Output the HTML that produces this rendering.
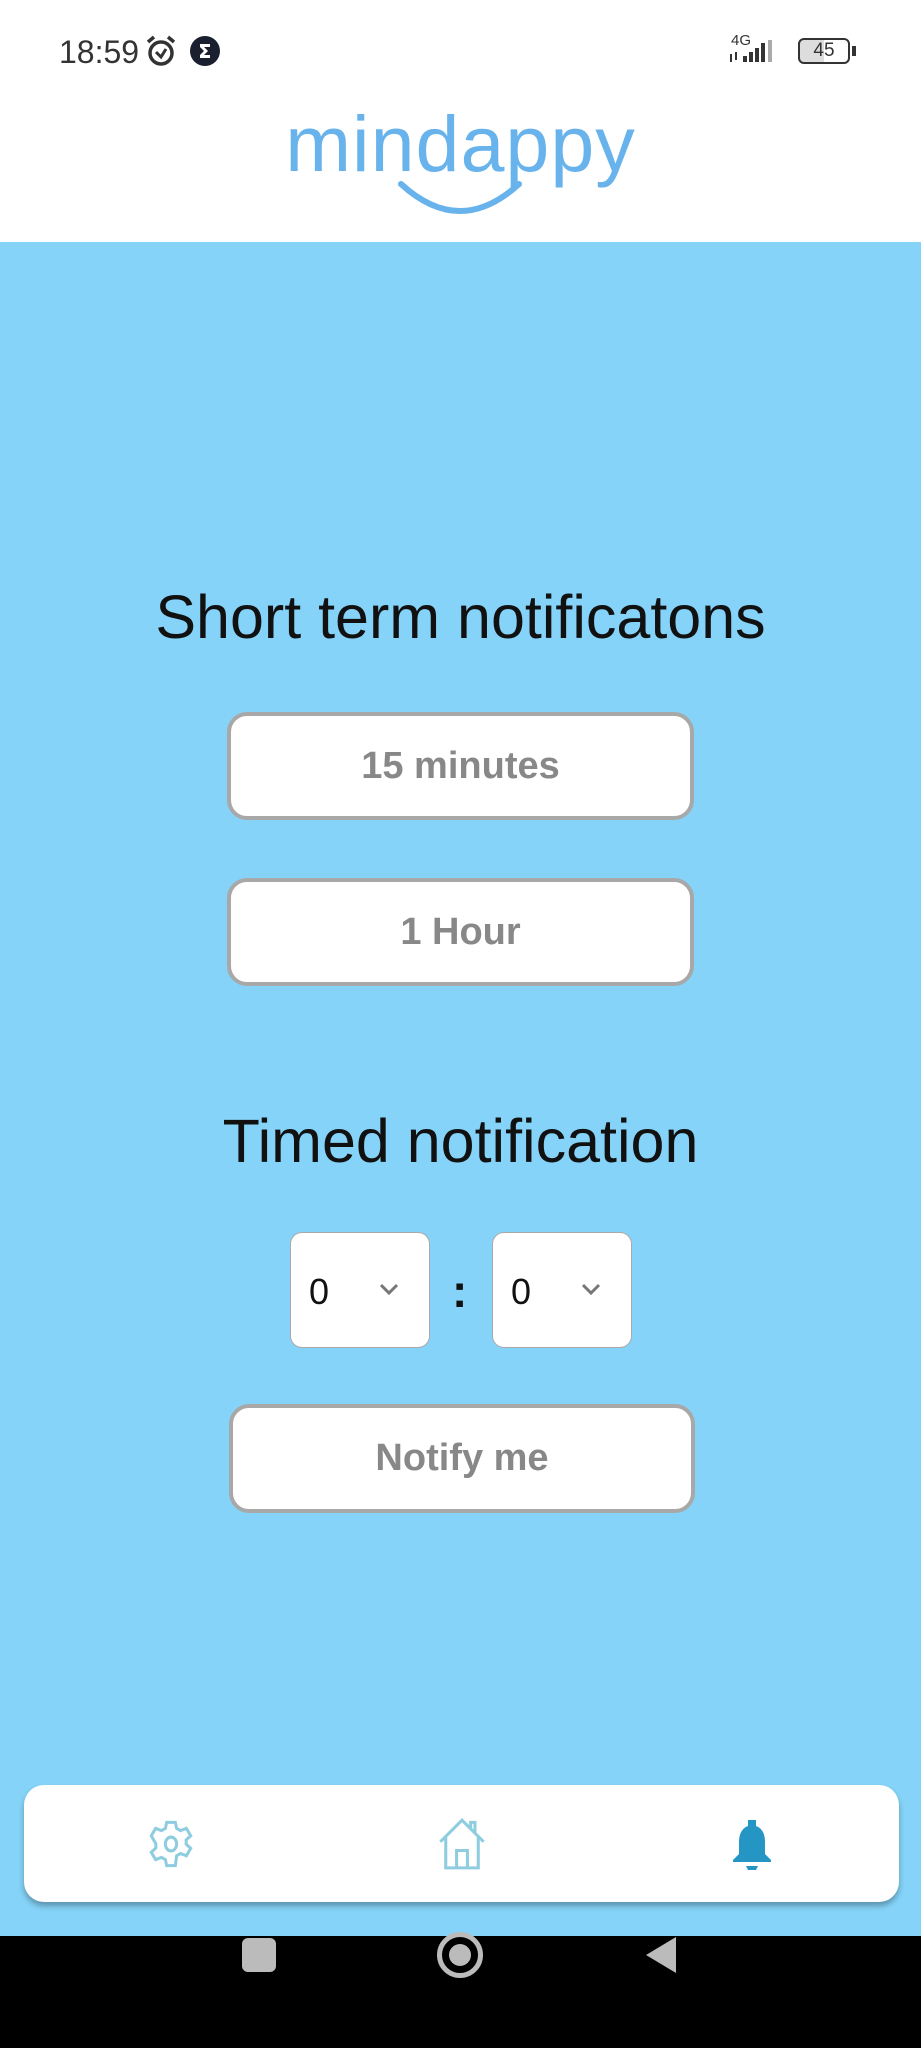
<!DOCTYPE html>
<html><head><meta charset="utf-8">
<style>
*{margin:0;padding:0;box-sizing:border-box}
body{width:921px;height:2048px;position:relative;overflow:hidden;background:#85d3f8;font-family:"Liberation Sans",sans-serif}
.hdr{position:absolute;left:0;top:0;width:921px;height:242px;background:#fff}
.time{position:absolute;left:59px;top:34px;font-size:32px;color:#333}
.logo{position:absolute;left:0;width:921px;top:98px;text-align:center;font-size:79px;color:#68b3ec;letter-spacing:1px;font-weight:300}
h2{position:absolute;left:0;width:921px;text-align:center;font-weight:normal;font-size:61px;color:#111}
.btn{position:absolute;background:#fff;border:4px solid #a8a8a8;border-radius:20px;text-align:center;font-weight:bold;font-size:38px;color:#888;display:flex;align-items:center;justify-content:center}
.sel{position:absolute;top:1232px;width:140px;height:116px;background:#fff;border:1px solid #aaa;border-radius:12px;font-size:36px;color:#111}
.sel span{position:absolute;left:18px;top:38px}
.sel svg{position:absolute;right:30px;top:50px}
.bar{position:absolute;left:24px;top:1785px;width:875px;height:117px;background:#fff;border-radius:20px;box-shadow:0 4px 6px rgba(0,0,0,.3)}
.nav{position:absolute;left:0;top:1936px;width:921px;height:112px;background:#000}
</style></head><body>
<div class="hdr">
<div class="time">18:59</div>
<svg style="position:absolute;left:145px;top:34px" width="32" height="34" viewBox="0 0 32 34"><circle cx="16" cy="19" r="11" fill="none" stroke="#333" stroke-width="3.5"/><path d="M11 18l5 5 5-8" fill="none" stroke="#333" stroke-width="3"/><path d="M3 8l6-5M29 8l-6-5" stroke="#333" stroke-width="3.5"/></svg>
<svg style="position:absolute;left:190px;top:36px" width="30" height="30"><circle cx="15" cy="15" r="15" fill="#1a2030"/><path d="M10 8h10v3h-6l4 4-4 4h6v3H10v-3l4-4-4-4z" fill="#fff"/></svg>
<div style="position:absolute;left:731px;top:32px;font-size:15px;color:#333">4G</div>
<svg style="position:absolute;left:729px;top:40px" width="58" height="24"><rect x="14" y="16" width="4" height="6" fill="#333"/><rect x="20" y="12" width="4" height="10" fill="#333"/><rect x="26" y="8" width="4" height="14" fill="#333"/><rect x="32" y="3" width="4" height="19" fill="#333"/><rect x="39" y="0" width="4" height="22" fill="#aaa"/><path d="M2 14v8M7 12v8" stroke="#333" stroke-width="2"/></svg>
<div style="position:absolute;left:798px;top:38px;width:52px;height:26px;border:2.5px solid #333;border-radius:6px;font-size:19px;text-align:center;line-height:21px;color:#333;background:linear-gradient(90deg,#ddd 50%,#fff 50%)">45</div>
<div style="position:absolute;left:852px;top:46px;width:4px;height:10px;background:#333"></div>
<div class="logo">mindappy</div>
<svg style="position:absolute;left:395px;top:178px" width="130" height="36"><path d="M6 6 Q65 60 124 6" fill="none" stroke="#68b3ec" stroke-width="6" stroke-linecap="round"/></svg>
</div>

<h2 style="top:582px">Short term notificatons</h2>
<div class="btn" style="left:227px;top:712px;width:467px;height:108px">15 minutes</div>
<div class="btn" style="left:227px;top:878px;width:467px;height:108px">1 Hour</div>
<h2 style="top:1106px">Timed notification</h2>
<div class="sel" style="left:290px"><span>0</span><svg width="20" height="12"><path d="M2 2l8 8 8-8" fill="none" stroke="#777" stroke-width="3"/></svg></div>
<div style="position:absolute;left:452px;top:1264px;font-size:46px;color:#111;font-weight:bold">:</div>
<div class="sel" style="left:492px"><span>0</span><svg width="20" height="12"><path d="M2 2l8 8 8-8" fill="none" stroke="#777" stroke-width="3"/></svg></div>
<div class="btn" style="left:229px;top:1404px;width:466px;height:109px">Notify me</div>

<div class="bar"></div>
<svg style="position:absolute;left:145px;top:1818px" width="52" height="52" viewBox="0 0 24 24"><path fill="none" stroke="#8ecde0" stroke-width="1.4" d="M10 2h4l.6 2.8 1.8 1 2.7-1 2 3.4-2.1 1.9v2l2.1 1.9-2 3.4-2.7-1-1.8 1L14 22h-4l-.6-2.8-1.8-1-2.7 1-2-3.4 2.1-1.9v-2L2.9 8.2l2-3.4 2.7 1 1.8-1z"/><ellipse cx="12" cy="12" rx="2.6" ry="3.2" fill="none" stroke="#8ecde0" stroke-width="1.4"/></svg>
<svg style="position:absolute;left:436px;top:1818px" width="52" height="52" viewBox="0 0 24 24"><path fill="none" stroke="#8ecde0" stroke-width="1.4" d="M2 11L12 1l10 10M4.5 9v14h15V9M9.5 23v-8h5v8M16 5V2h2v5"/></svg>
<svg style="position:absolute;left:728px;top:1818px" width="48" height="52" viewBox="0 0 24 26"><path fill="#2596c4" d="M10 1h4v3c3 1 4.5 4 4.5 8v6l3 3v1H2.5v-1l3-3v-6c0-4 1.5-7 4.5-8z"/><path fill="#2596c4" d="M9 24h6l-1 2h-4z"/></svg>

<div class="nav">
<div style="position:absolute;left:242px;top:2px;width:34px;height:34px;background:#bbb;border-radius:6px"></div>
<div style="position:absolute;left:437px;top:-4px;width:46px;height:46px;border:5px solid #bbb;border-radius:50%"></div>
<div style="position:absolute;left:449px;top:8px;width:22px;height:22px;background:#bbb;border-radius:50%"></div>
<svg style="position:absolute;left:644px;top:-1px" width="34" height="40"><path d="M32 2v36L2 20z" fill="#bbb"/></svg>
</div>
</body></html>
